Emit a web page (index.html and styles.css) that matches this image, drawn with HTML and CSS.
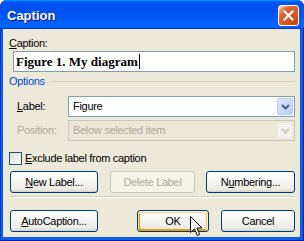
FILE: index.html
```html
<!DOCTYPE html>
<html lang="en">
  <head>
    <meta charset="UTF-8" />
    <title>Caption</title>
    <link rel="stylesheet" href="styles.css">
  </head>
  <body>
    <div class="window">
      <div class="titlebar">
        <span class="title">Caption</span>
        <span class="close">
          <svg width="11" height="11" viewBox="0 0 11 11">
            <path d="M1.5 1.5 L9.5 9.5 M9.5 1.5 L1.5 9.5" stroke="#fff" stroke-width="2.2" stroke-linecap="square" />
          </svg>
        </span>
      </div>
      <div class="body">
        <div class="field-label"><u>C</u>aption:</div>
        <div class="textbox">Figure 1. My diagram<span class="caret"></span></div>
        <!-- options group -->
        <div class="group">
          <span class="group-title">Options</span>
          <span class="rule"></span>
        </div>
        <div class="row">
          <span class="row-label"><u>L</u>abel:</span>
          <div class="combo">
            <span class="combo-text">Figure</span>
            <span class="drop">
              <svg width="9" height="6" viewBox="0 0 9 6">
                <path d="M1 1 L4.5 4.5 L8 1" fill="none" stroke="currentColor" stroke-width="2" />
              </svg>
            </span>
          </div>
        </div>
        <div class="row disabled">
          <span class="row-label">Position:</span>
          <div class="combo">
            <span class="combo-text">Below selected item</span>
            <span class="drop">
              <svg width="9" height="6" viewBox="0 0 9 6">
                <path d="M1 1 L4.5 4.5 L8 1" fill="none" stroke="currentColor" stroke-width="2" />
              </svg>
            </span>
          </div>
        </div>
        <div class="check">
          <span class="box"></span>
          <span><u>E</u>xclude label from caption</span>
        </div>
        <div class="buttons">
          <button class="btn w88"><u>N</u>ew Label...</button>
          <button class="btn w85" disabled>Delete Label</button>
          <button class="btn w89">N<u>u</u>mbering...</button>
        </div>
        <div class="sep"></div>
        <div class="buttons">
          <button class="btn w88"><u>A</u>utoCaption...</button>
          <button class="btn ok">OK</button>
          <button class="btn cancel">Cancel</button>
        </div>
      </div>
      <svg class="cursor" width="13" height="21" viewBox="0 0 13 21">
        <path d="M0.5 0.5 L0.5 16.5 L4.5 12.8 L7.2 19.5 L9.6 18.5 L7 12 L12 12 Z" fill="#fff" stroke="#000" stroke-width="1" stroke-linejoin="miter" />
      </svg>
    </div>
  </body>
</html>
```

FILE: styles.css
```css
* {
  margin: 0;
  padding: 0;
  box-sizing: border-box;
}
body {
  width: 304px;
  height: 241px;
  font-family: "Liberation Sans", Arial, sans-serif;
  font-size: 11px;
  line-height: 13px;
  color: #000;
  background: #fff;
}
u {
  text-decoration: underline;
  text-underline-offset: 1px;
}
.window {
  width: 304px;
  height: 241px;
  display: flex;
  flex-direction: column;
  position: relative;
  background: #0b5ce6;
  border-radius: 7px 7px 0 0;
  box-shadow: inset 1px 0 #0831d9, inset -1px 0 #001ea0, inset 0 -1px #001ea0;
}
/* title bar */
.titlebar {
  height: 29px;
  flex: none;
  display: flex;
  align-items: center;
  justify-content: space-between;
  padding: 0 5px 0 7px;
  border-radius: 7px 7px 0 0;
  background: linear-gradient(180deg, #0997ff, #0053ee 8%, #0050ee 40%, #0066ff 88%, #0066ff 93%, #005bff 95%, #003dd7 96%, #003dd7);
}
.title {
  color: #fff;
  font-weight: bold;
  font-size: 13px;
  text-shadow: 1px 1px #0f1089;
  padding-top: 1px;
}
.close {
  width: 21px;
  height: 21px;
  display: flex;
  align-items: center;
  justify-content: center;
  border: 1px solid #fff;
  border-radius: 3px;
  background: radial-gradient(circle at 90% 90%, #cc4600 0, #dc5a2c 55%, #d8673f 72%, #f6b79c 90%, #fff 100%);
  margin-top: 1px;
}
/* dialog body */
.body {
  flex: 1;
  margin: 0 4px 4px 3px;
  padding: 8px 5px 0 6px;
  background: #ece9d8;
  letter-spacing: -0.3px;
}
.textbox {
  margin: 1px 0 0 4px;
  height: 21px;
  border: 1px solid #7f9db9;
  background: #fff;
  padding: 0 2px;
  display: flex;
  align-items: center;
  font-family: "Liberation Serif", "Times New Roman", serif;
  font-weight: bold;
  font-size: 13px;
  letter-spacing: 0;
}
.caret {
  width: 1px;
  height: 15px;
  background: #000;
  margin-left: 1px;
}
.group {
  display: flex;
  margin-top: 3px;
  height: 13px;
}
.group-title {
  color: #0046d5;
}
.rule {
  flex: 1;
  height: 1px;
  margin: 6px 0 0 6px;
  background: #d0d0bf;
}
.row {
  display: flex;
  align-items: center;
  height: 21px;
  margin-top: 8px;
}
.row + .row {
  margin-top: 3px;
}
.row-label {
  width: 51px;
  margin-left: 8px;
  flex: none;
}
.combo {
  flex: 1;
  height: 21px;
  border: 1px solid #7f9db9;
  background: #fff;
  display: flex;
  align-items: center;
  justify-content: space-between;
  padding: 1px;
}
.combo-text {
  padding-left: 3px;
}
.drop {
  width: 16px;
  height: 17px;
  display: flex;
  align-items: center;
  justify-content: center;
  border: 1px solid #b7cbf7;
  border-radius: 2px;
  color: #4d6185;
  background: linear-gradient(135deg, #dbe6fd, #b9cefb);
}
.disabled {
  color: #aca899;
}
.disabled .combo {
  border-color: #c9c7ba;
  background: #ebe8d7;
}
.disabled .drop {
  border-color: #e8e8df;
  background: #f3f2ec;
  color: #c9c8bc;
}
.check {
  display: flex;
  align-items: center;
  margin-top: 11px;
  height: 13px;
}
.box {
  width: 13px;
  height: 13px;
  border: 1px solid #1c5180;
  background: linear-gradient(135deg, #dcdcd7, #fff);
  margin-right: 3px;
}
/* buttons */
.buttons {
  display: flex;
  margin: 6px 0 0 1px;
}
.sep + .buttons {
  margin-top: 12px;
}
.btn {
  height: 22px;
  font: inherit;
  letter-spacing: inherit;
  color: #000;
  border: 1px solid #003c74;
  border-radius: 3px;
  background: linear-gradient(180deg, #fff, #ecebe6 86%, #d6d0c5);
}
.btn:disabled {
  color: #aca899;
  border-color: #c9c7ba;
  background: #f5f4ea;
}
.w88 {
  width: 88px;
}
.w85 {
  width: 85px;
  margin-left: 12px;
}
.w89 {
  width: 89px;
  margin-left: 11px;
}
.ok {
  width: 72px;
  margin-left: auto;
  box-shadow: inset -1px 1px #fff0cf, inset 1px 2px #fdd889, inset -2px 2px #fbc761, inset 2px -2px #e5a01a;
}
.cancel {
  width: 74px;
  margin-left: 12px;
}
.sep {
  height: 2px;
  margin: 3px 0 0 1px;
  border-top: 1px solid #d0d0bf;
  border-bottom: 1px solid #fff;
}
.cursor {
  position: absolute;
  left: 190px;
  top: 216px;
}
```
